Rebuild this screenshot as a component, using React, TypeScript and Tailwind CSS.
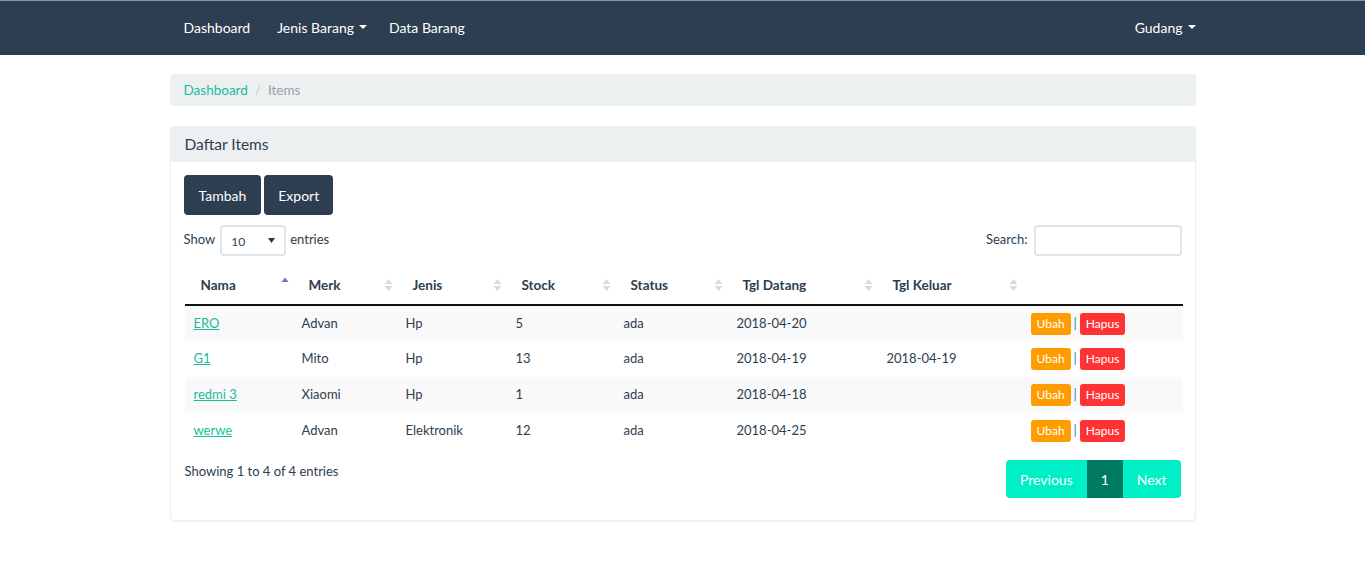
import React from 'react';

type Item = {
  nama: string;
  merk: string;
  jenis: string;
  stock: number;
  status: string;
  datang: string;
  keluar: string;
};

const items: Item[] = [
  { nama: 'ERO', merk: 'Advan', jenis: 'Hp', stock: 5, status: 'ada', datang: '2018-04-20', keluar: '' },
  { nama: 'G1', merk: 'Mito', jenis: 'Hp', stock: 13, status: 'ada', datang: '2018-04-19', keluar: '2018-04-19' },
  { nama: 'redmi 3', merk: 'Xiaomi', jenis: 'Hp', stock: 1, status: 'ada', datang: '2018-04-18', keluar: '' },
  { nama: 'werwe', merk: 'Advan', jenis: 'Elektronik', stock: 12, status: 'ada', datang: '2018-04-25', keluar: '' },
];

const columns = [
  { label: 'Nama', w: 'w-[108px]', sort: 'asc' },
  { label: 'Merk', w: 'w-[104px]', sort: 'both' },
  { label: 'Jenis', w: 'w-[109px]', sort: 'both' },
  { label: 'Stock', w: 'w-[109px]', sort: 'both' },
  { label: 'Status', w: 'w-[112px]', sort: 'both' },
  { label: 'Tgl Datang', w: 'w-[150px]', sort: 'both' },
  { label: 'Tgl Keluar', w: 'w-[145px]', sort: 'both' },
  { label: '', w: '', sort: 'none' },
];

const Caret = () => (
  <svg width="8" height="4" viewBox="0 0 8 4" className="ml-[5px] inline-block">
    <path d="M0 0h8L4 4z" fill="currentColor" />
  </svg>
);

const SortIcon = ({ sort }: { sort: string }) => {
  if (sort === 'none') return null;
  if (sort === 'asc')
    return (
      <svg width="8" height="14" viewBox="0 0 8 14" className="absolute right-[4px] top-[10px]">
        <path d="M0.5 6h7L4 1.5z" fill="#7b6fd6" />
      </svg>
    );
  return (
    <svg width="9" height="16" viewBox="0 0 9 16" className="absolute right-[4px] top-[11px]">
      <path d="M0.5 7h8L4.5 2z" fill="#dadada" />
      <path d="M0.5 9h8L4.5 14z" fill="#dadada" />
    </svg>
  );
};

const App: React.FC = () => {
  return (
    <div className="min-h-screen bg-white text-[#2c3e50] text-[13px]" style={{ fontFamily: 'Lato, "Open Sans", sans-serif' }}>
      <nav className="h-[55px] bg-[#2c3e50] border-t border-[#8a939c]">
        <div className="mx-auto w-[1026px] h-full flex items-center justify-between text-white text-[14px] pb-[2px]">
          <div className="flex items-center">
            <span className="px-[14px]">Dashboard</span>
            <span className="px-[13px] flex items-center">Jenis Barang<Caret /></span>
            <span className="pl-[9px]">Data Barang</span>
          </div>
          <span className="flex items-center">Gudang<Caret /></span>
        </div>
      </nav>

      <main className="mx-auto w-[1026px] pt-[19px]">
        <div className="h-[32px] bg-[#ecf0f1] rounded flex items-center px-[14px] text-[13.5px] pt-px">
          <span className="text-[#18bc9c]">Dashboard</span>
          <span className="text-[#ccc] px-[7px]">/</span>
          <span className="text-[#95a5a6]">Items</span>
        </div>

        <div className="mt-[20px] border border-[#ecf0f1] rounded shadow-[0_1px_2px_rgba(0,0,0,0.06)]">
          <div className="h-[35px] bg-[#ecf0f1] flex items-center px-[14px] text-[15.5px] text-[#2c3e50] pt-px">
            Daftar Items
          </div>
          <div className="px-[13px] pt-[13px] pb-[22px]">
            <div className="flex gap-[3px]">
              <button className="h-[40px] px-[15px] bg-[#2c3e50] text-white rounded text-[14px]">Tambah</button>
              <button className="h-[40px] px-[14px] bg-[#2c3e50] text-white rounded text-[14px]">Export</button>
            </div>

            <div className="flex items-center justify-between mt-[9px] h-[32px] text-[13px]">
              <div className="flex items-center pb-px">
                <span>Show</span>
                <div className="ml-[5px] mr-[4px] mt-px w-[66px] h-[31px] border-2 border-[#dce4ec] rounded flex items-center justify-between px-[9px] text-[12px]">
                  <span className="pt-[3px]">10</span>
                  <svg width="7" height="5" viewBox="0 0 7 5"><path d="M0 0h7L3.5 5z" fill="#333" /></svg>
                </div>
                <span>entries</span>
              </div>
              <div className="flex items-center pb-px">
                <span className="mr-[6px]">Search:</span>
                <div className="mt-px w-[148px] h-[31px] border-2 border-[#dce4ec] rounded" />
              </div>
            </div>

            <table className="w-[998px] mt-[10px] ml-px border-collapse text-[13px]">
              <thead>
                <tr className="h-[39px] border-b-2 border-[#111] text-[13.5px]">
                  {columns.map((c, i) => (
                    <th key={i} className={`relative text-left font-bold pl-[16px] pt-0 ${c.w}`}>
                      {c.label}
                      <SortIcon sort={c.sort} />
                    </th>
                  ))}
                </tr>
              </thead>
              <tbody>
                {items.map((it, i) => (
                  <tr key={it.nama} className={`h-[36px] ${i % 2 === 0 ? 'bg-[#f9f9f9]' : 'bg-white'}`}>
                    <td className="pl-[9px]"><span className="text-[#18bc9c] underline">{it.nama}</span></td>
                    <td className="pl-[9px]">{it.merk}</td>
                    <td className="pl-[9px]">{it.jenis}</td>
                    <td className="pl-[10px]">{it.stock}</td>
                    <td className="pl-[9px]">{it.status}</td>
                    <td className="pl-[10px]">{it.datang}</td>
                    <td className="pl-[10px]">{it.keluar}</td>
                    <td className="pl-[9px]">
                      <div className="flex items-center">
                        <span className="h-[22px] px-[6px] flex items-center bg-[#ff9c00] text-white text-[12px] rounded-[3px]">Ubah</span>
                        <span className="mx-[3px] text-[#337ab7] text-[13px]">|</span>
                        <span className="h-[22px] px-[6px] flex items-center bg-[#ff3333] text-white text-[12px] rounded-[3px]">Hapus</span>
                      </div>
                    </td>
                  </tr>
                ))}
              </tbody>
            </table>

            <div className="flex justify-between mt-[11px] text-[13px]">
              <div className="pt-[2px] pl-px">Showing 1 to 4 of 4 entries</div>
              <div className="flex h-[38px] rounded overflow-hidden text-white text-[14px] mr-px">
                <span className="px-[14px] flex items-center bg-[#00efc6]">Previous</span>
                <span className="w-[36px] flex items-center justify-center bg-[#007a60]">1</span>
                <span className="px-[14px] flex items-center bg-[#00efc6]">Next</span>
              </div>
            </div>
          </div>
        </div>
      </main>
    </div>
  );
};

export default App;
